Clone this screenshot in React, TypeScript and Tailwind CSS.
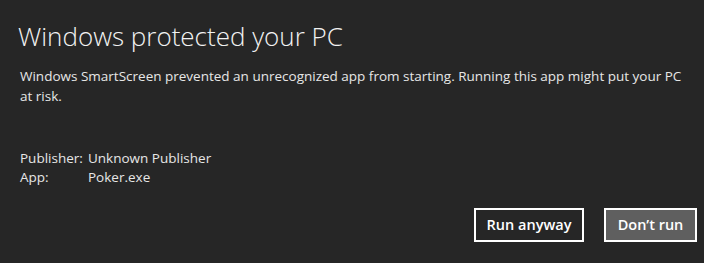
export default function App() {
  return (
    <div
      className="flex h-[263px] w-[704px] flex-col bg-[#262626] text-white"
      style={{ fontFamily: '"Segoe UI", "Open Sans", sans-serif' }}
    >
      {/* Header */}
      <div className="pl-[18px] pr-[16px] pt-[19px]">
        <h1 className="text-[26px] font-light leading-[34px] text-[#f2f2f2]">Windows protected your PC</h1>
        <p className="mt-[13px] pl-[2px] pr-[4px] text-[13.5px] leading-[20px] text-[#e6e6e6]">
          Windows SmartScreen prevented an unrecognized app from starting. Running this app might put your PC at risk.
        </p>
      </div>

      {/* Details */}
      <div className="mt-[43px] grid grid-cols-[68px_1fr] pl-[20px] text-[13.5px] leading-[19px] text-[#e6e6e6]">
        <span>Publisher:</span>
        <span>Unknown Publisher</span>
        <span>App:</span>
        <span>Poker.exe</span>
      </div>

      {/* Actions */}
      <div className="mt-[21px] flex justify-end gap-[20px] pr-[7px]">
        <button className="h-[34px] w-[110px] border-2 border-white bg-[#262626] text-[14.5px] font-semibold text-white">
          Run anyway
        </button>
        <button className="h-[34px] w-[93px] border-2 border-white bg-[#5f5f5f] text-[14.5px] font-semibold text-white">
          Don’t run
        </button>
      </div>
    </div>
  )
}
